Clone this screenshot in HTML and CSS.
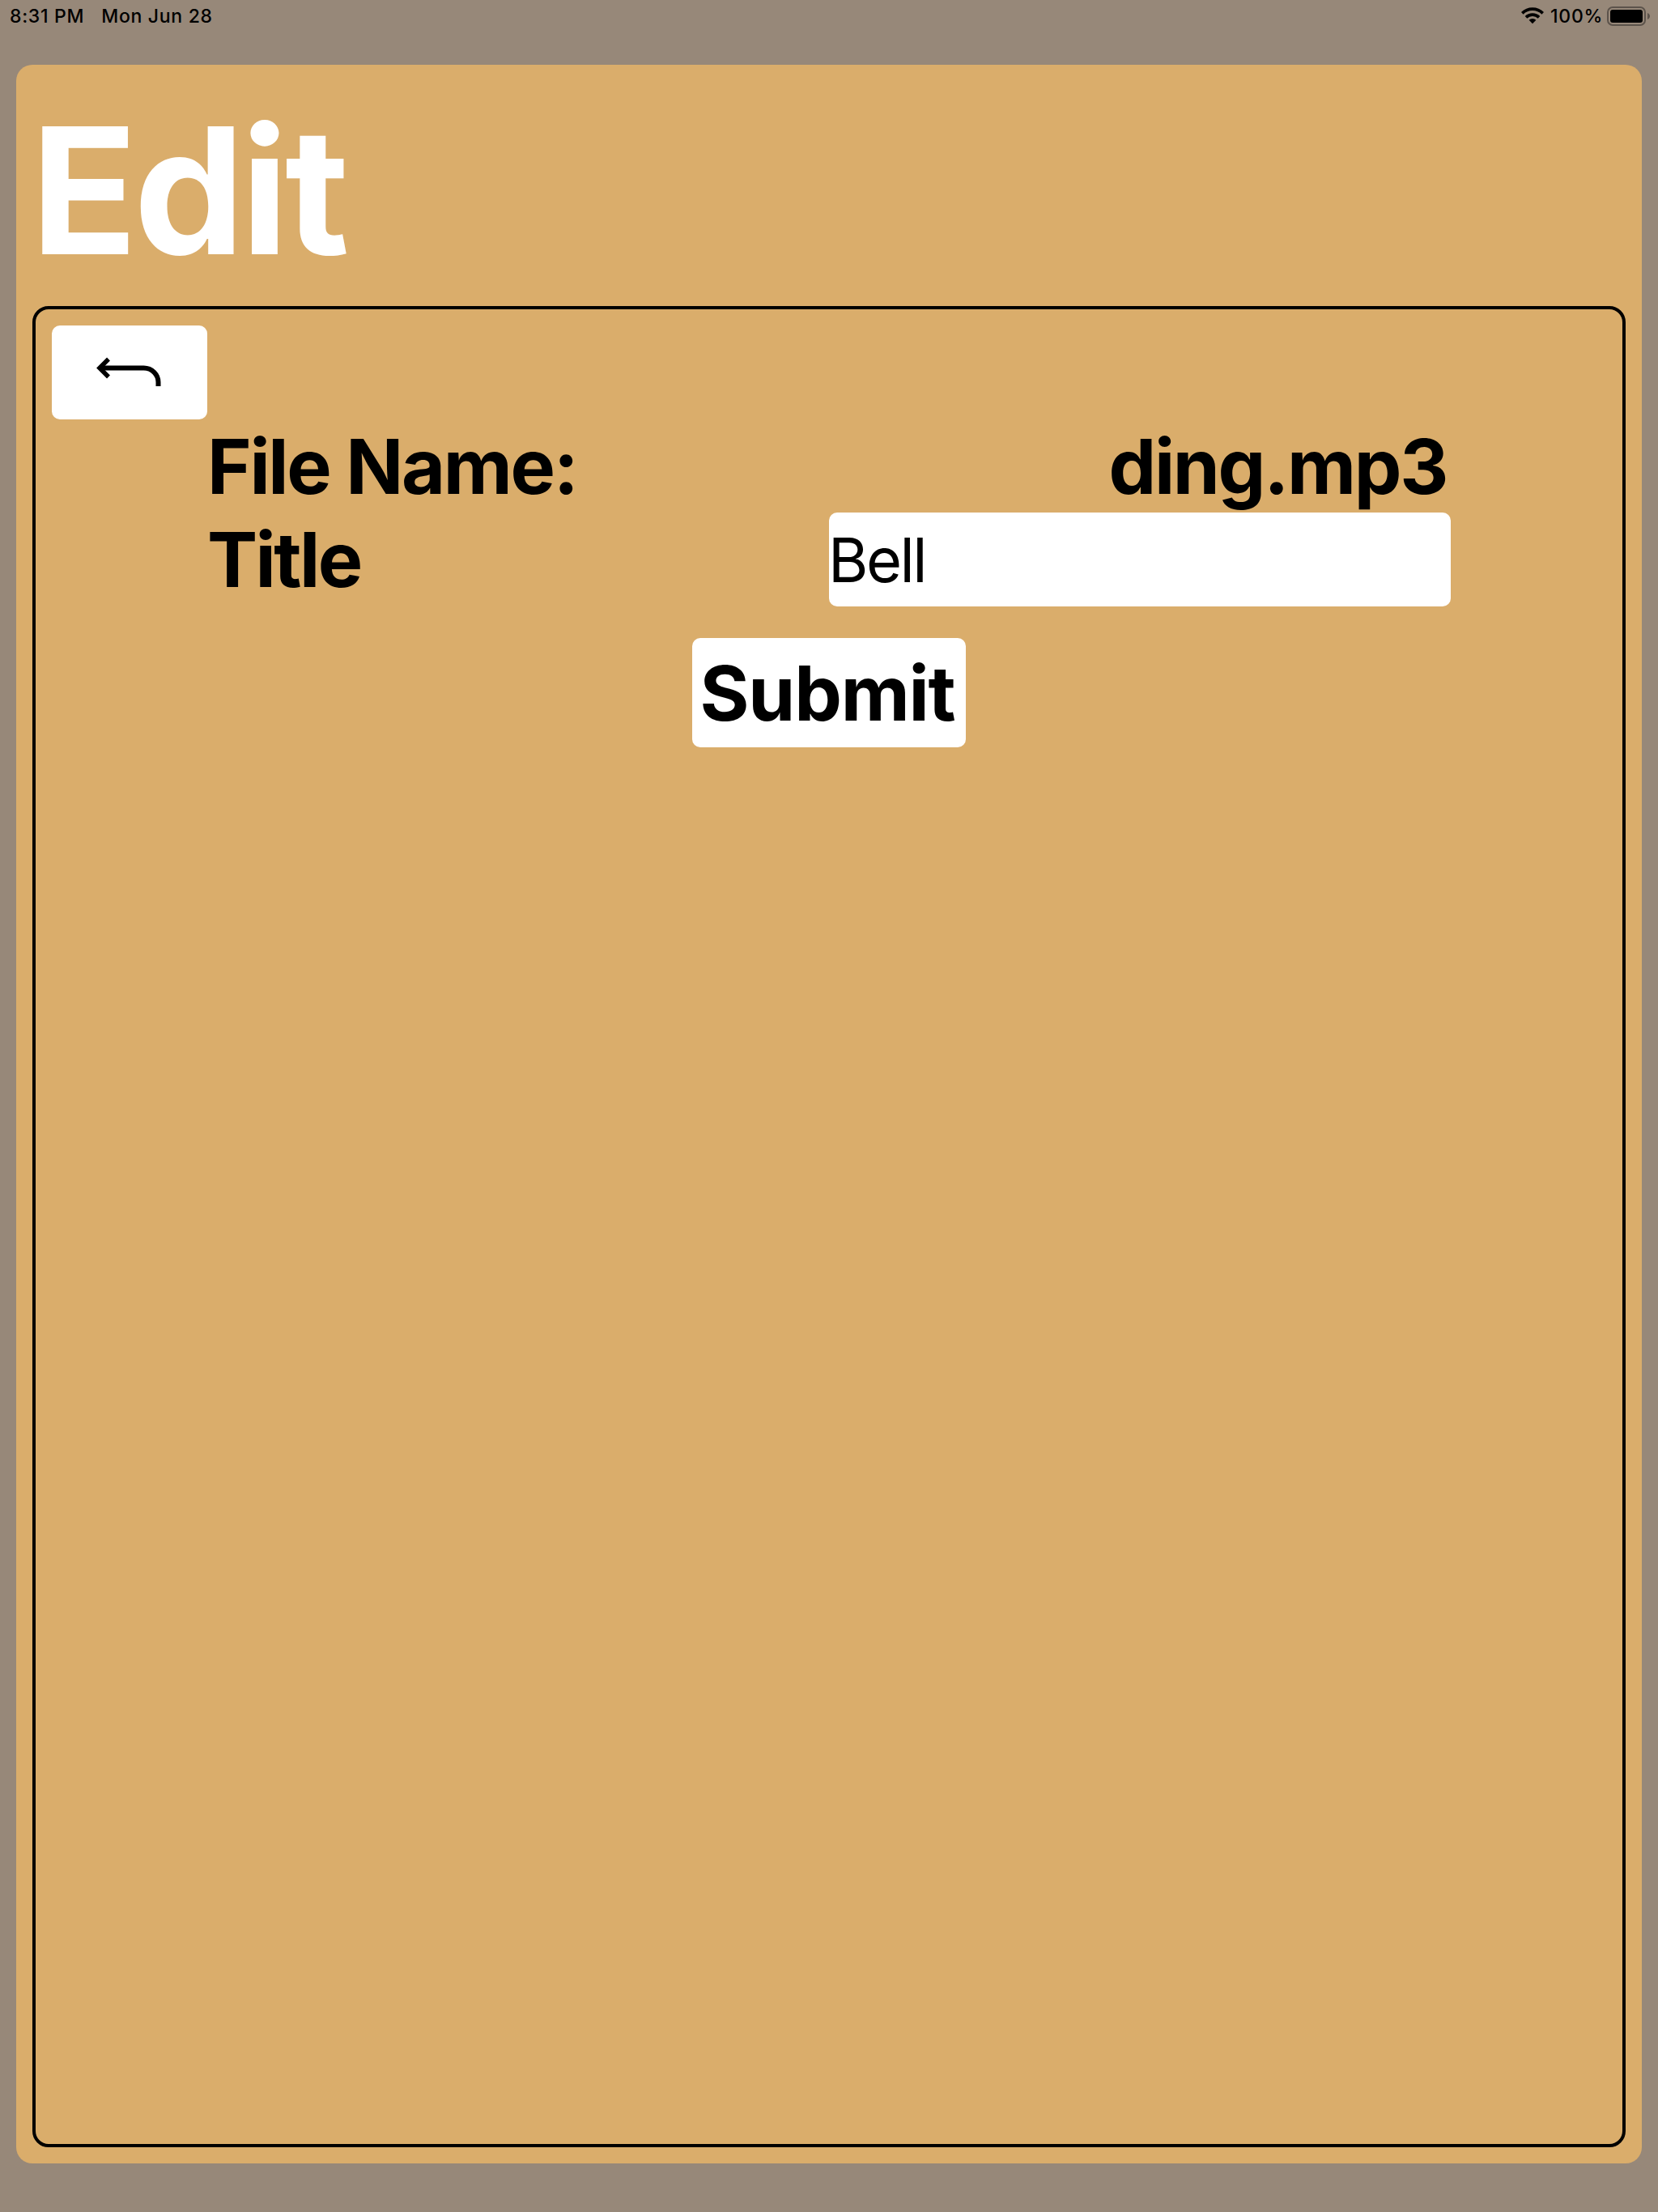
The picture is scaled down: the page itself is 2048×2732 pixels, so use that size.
FILE: index.html
```html
<!DOCTYPE html>
<html lang="en">
<head>
<meta charset="utf-8">
<title>Edit</title>
<link rel="stylesheet" href="styles.css">
</head>
<body>
<header class="status">
  <span class="time">8:31 PM</span>
  <span class="date">Mon Jun 28</span>
  <svg class="wifi" width="28" height="21" viewBox="0 0 28 21">
    <g fill="none" stroke="#000" stroke-width="3.7">
      <path d="M1.3 7.3a18.2 18.2 0 0 1 25.4 0"/>
      <path d="M6 12.3a11.6 11.6 0 0 1 16 0"/>
    </g>
    <path d="M14 20.2l-4.4-4.4a6.4 6.4 0 0 1 8.8 0z"/>
  </svg>
  <span class="percent">100%</span>
  <svg class="battery" width="54" height="24" viewBox="0 0 54 24">
    <rect x="1" y="1" width="46" height="22" rx="6" fill="none" stroke="#5c534b" stroke-width="2"/>
    <rect x="4" y="4" width="40" height="16" rx="3"/>
    <path d="M50 8c4 1.400 4 6.600 0 8z" fill="#5c534b"/>
  </svg>
</header>
<main class="card">
  <h1 class="heading">Edit</h1>
  <section class="panel">
    <button class="back" aria-label="Back">
      <svg width="82" height="38" viewBox="0 0 82 38">
        <path d="M6 14.500H58.500C69 14.500 76.500 23 76.500 32V37" fill="none" stroke="#000" stroke-width="6"/>
        <path d="M15 3.500L4 14.500L15 25.500" fill="none" stroke="#000" stroke-width="5.500"/>
      </svg>
    </button>
    <form class="form">
      <div class="row">
        <span class="label name">File Name:</span>
        <span class="label file">ding.mp3</span>
      </div>
      <div class="row">
        <label class="label title" for="title">Title</label>
        <input class="field" id="title" type="text" value="Bell">
      </div>
      <button class="submit" type="button">Submit</button>
    </form>
  </section>
</main>
</body>
</html>
```
FILE: styles.css
```css
* { box-sizing: border-box; }

body {
  margin: 0;
  height: 2732px;
  display: flex;
  flex-direction: column;
  background: #978879;
  color: #000;
  font-family: Inter, "Liberation Sans", sans-serif;
}

.status {
  height: 80px;
  padding: 0 9px 0 12px;
  display: flex;
  align-items: flex-start;
  font-size: 23px;
  line-height: 40px;
  font-weight: 500;
  letter-spacing: 0.7px;
  white-space: nowrap;
}
.date { margin-left: 21px; }
.wifi { margin: 9px 8px 0 auto; }
.battery { margin: 8px 0 0 5px; }

.card {
  height: 2592px;
  margin: 0 20px;
  padding: 20px;
  display: flex;
  flex-direction: column;
  border-radius: 20px;
  background: #daad6b;
}
.heading {
  height: 278px;
  margin: 0 0 0 -2px;
  font-size: 217px;
  line-height: 270px;
  font-weight: 700;
  letter-spacing: -4.5px;
  color: #fff;
}

.panel {
  flex: 1;
  padding: 20px;
  border: 4px solid #000;
  border-radius: 20px;
}
.back {
  display: flex;
  width: 192px;
  height: 116px;
  padding: 38px 0 0 55px;
  border: 0;
  border-radius: 10px;
  background: #fff;
}

.form {
  width: 1536px;
  margin: 0 auto;
  display: flex;
  flex-direction: column;
}
.row {
  height: 115px;
  display: flex;
  justify-content: space-between;
}
.label {
  font-size: 93.2px;
  line-height: 116px;
  font-weight: 700;
  letter-spacing: -2.3px;
}
.title { letter-spacing: -2.6px; }
.file { padding-right: 5px; }
.field {
  width: 768px;
  height: 116px;
  padding: 0;
  border: 0;
  border-radius: 10px;
  background: #fff;
  font-family: inherit;
  font-size: 75.6px;
  letter-spacing: -2.5px;
  text-indent: -1px;
  color: #000;
}
.submit {
  align-self: center;
  width: 338px;
  height: 135px;
  margin-top: 40px;
  padding: 0 4px 0 0;
  border: 0;
  border-radius: 10px;
  background: #fff;
  font-family: inherit;
  font-size: 93.2px;
  font-weight: 700;
  letter-spacing: -1.2px;
  color: #000;
}
```
